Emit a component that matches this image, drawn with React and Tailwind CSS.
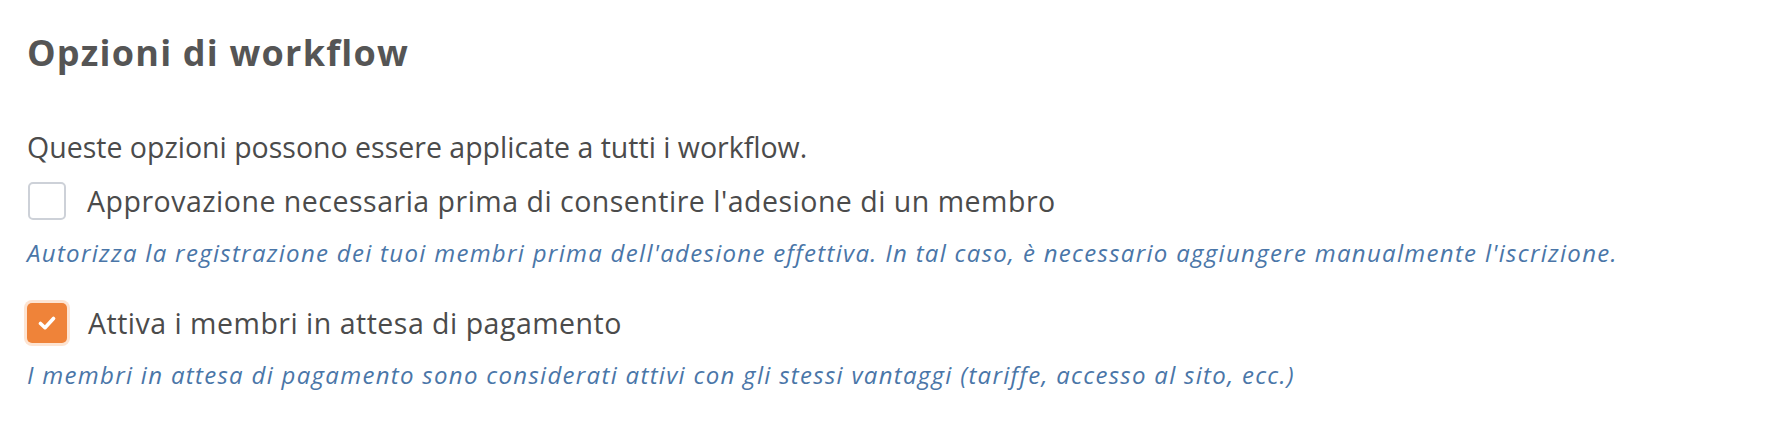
import React, { useState } from 'react';

const Checkbox = ({ checked, onChange }) => (
  <button
    type="button"
    onClick={onChange}
    className={
      checked
        ? 'flex h-[40px] w-[40px] shrink-0 items-center justify-center rounded-[5px] bg-[#ef8339] ring-[3px] ring-[#fde4d2]'
        : 'ml-[1px] h-[38px] w-[38px] shrink-0 rounded-[5px] border-2 border-[#cdd1d8] bg-white'
    }
  >
    {checked && (
      <svg width="18" height="14" viewBox="0 0 18 14" fill="none">
        <path d="M2.5 7.5l4.5 4.2L15.5 2.5" stroke="white" strokeWidth="3.6" strokeLinecap="round" strokeLinejoin="round" />
      </svg>
    )}
  </button>
);

const Option = ({ label, help, checked, onChange, className }) => (
  <div className={className}>
    <label className="flex h-[40px] items-center gap-[21px]">
      <Checkbox checked={checked} onChange={onChange} />
      <span className="text-[28.5px] leading-[36px] tracking-[0.5px] text-[#4b4b4b]">{label}</span>
    </label>
    <p className="mt-[16px] text-[24px] italic leading-[32px] tracking-[1.3px] text-[#4a76a8]">{help}</p>
  </div>
);

const App = () => {
  const [approval, setApproval] = useState(false);
  const [pending, setPending] = useState(true);

  return (
    <div className="min-h-screen bg-white px-[27px] pt-[31px] font-['Open_Sans',sans-serif]">
      <h2 className="text-[36px] font-bold leading-[44px] tracking-[1.2px] text-[#555555]">
        Opzioni di workflow
      </h2>
      <p className="mt-[54px] text-[28.5px] leading-[36px] text-[#4b4b4b]">
        Queste opzioni possono essere applicate a tutti i workflow.
      </p>
      <Option
        className="mt-[16px]"
        label="Approvazione necessaria prima di consentire l'adesione di un membro"
        help="Autorizza la registrazione dei tuoi membri prima dell'adesione effettiva. In tal caso, è necessario aggiungere manualmente l'iscrizione."
        checked={approval}
        onChange={() => setApproval(!approval)}
      />
      <Option
        className="mt-[34px]"
        label="Attiva i membri in attesa di pagamento"
        help="I membri in attesa di pagamento sono considerati attivi con gli stessi vantaggi (tariffe, accesso al sito, ecc.)"
        checked={pending}
        onChange={() => setPending(!pending)}
      />
    </div>
  );
};

export default App;
